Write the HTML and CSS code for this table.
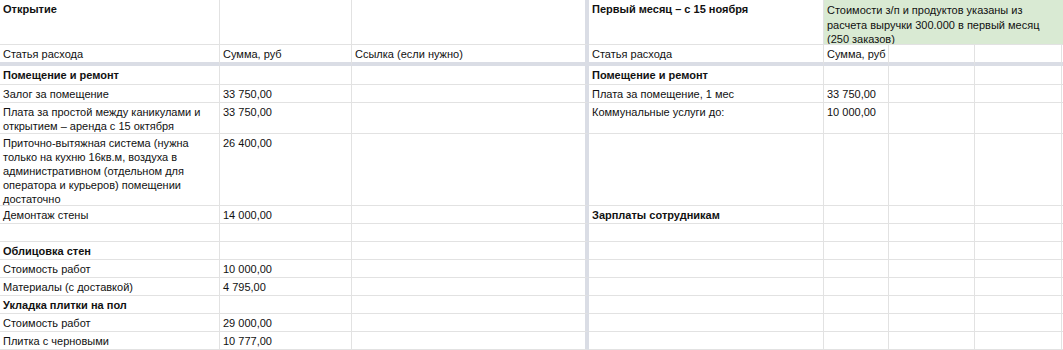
FILE: index.html
```html
<!DOCTYPE html>
<html lang="ru">
<head>
<meta charset="utf-8">
<title>Открытие — смета</title>
<link rel="stylesheet" href="styles.css">
</head>
<body>
<div class="sheet">
  <!-- row 1 -->
  <div class="c b">Открытие</div>
  <div class="c"></div>
  <div class="c sep"></div>
  <div class="c b">Первый месяц – с 15 ноября</div>
  <div class="c green">Стоимости з/п и продуктов указаны из<br>расчета выручки 300.000 в первый месяц<br>(250 заказов)</div>
  <!-- row 2 -->
  <div class="c hdr">Статья расхода</div>
  <div class="c hdr">Сумма, руб</div>
  <div class="c hdr sep">Ссылка (если нужно)</div>
  <div class="c hdr">Статья расхода</div>
  <div class="c hdr nw">Сумма, руб</div>
  <div class="c hdr"></div>
  <div class="c hdr"></div>
  <div class="c hdr"></div>
  <!-- row 3 -->
  <div class="c b">Помещение и ремонт</div>
  <div class="c"></div>
  <div class="c sep"></div>
  <div class="c b">Помещение и ремонт</div>
  <div class="c"></div><div class="c"></div><div class="c"></div><div class="c"></div>
  <!-- row 4 -->
  <div class="c">Залог за помещение</div>
  <div class="c">33 750,00</div>
  <div class="c sep"></div>
  <div class="c">Плата за помещение, 1 мес</div>
  <div class="c nw">33 750,00</div>
  <div class="c"></div><div class="c"></div><div class="c"></div>
  <!-- row 5 -->
  <div class="c">Плата за простой между каникулами и открытием – аренда с 15 октября</div>
  <div class="c">33 750,00</div>
  <div class="c sep"></div>
  <div class="c">Коммунальные услуги до:</div>
  <div class="c nw">10 000,00</div>
  <div class="c"></div><div class="c"></div><div class="c"></div>
  <!-- row 6 -->
  <div class="c">Приточно-вытяжная система (нужна только на кухню 16кв.м, воздуха в административном (отдельном для оператора и курьеров) помещении достаточно</div>
  <div class="c">26 400,00</div>
  <div class="c sep"></div>
  <div class="c"></div>
  <div class="c"></div><div class="c"></div><div class="c"></div><div class="c"></div>
  <!-- row 7 -->
  <div class="c">Демонтаж стены</div>
  <div class="c">14 000,00</div>
  <div class="c sep"></div>
  <div class="c b">Зарплаты сотрудникам</div>
  <div class="c"></div><div class="c"></div><div class="c"></div><div class="c"></div>
  <!-- row 8 -->
  <div class="c"></div>
  <div class="c"></div>
  <div class="c sep"></div>
  <div class="c"></div>
  <div class="c"></div><div class="c"></div><div class="c"></div><div class="c"></div>
  <!-- row 9 -->
  <div class="c b">Облицовка стен</div>
  <div class="c"></div>
  <div class="c sep"></div>
  <div class="c"></div>
  <div class="c"></div><div class="c"></div><div class="c"></div><div class="c"></div>
  <!-- row 10 -->
  <div class="c">Стоимость работ</div>
  <div class="c">10 000,00</div>
  <div class="c sep"></div>
  <div class="c"></div>
  <div class="c"></div><div class="c"></div><div class="c"></div><div class="c"></div>
  <!-- row 11 -->
  <div class="c">Материалы (с доставкой)</div>
  <div class="c">4 795,00</div>
  <div class="c sep"></div>
  <div class="c"></div>
  <div class="c"></div><div class="c"></div><div class="c"></div><div class="c"></div>
  <!-- row 12 -->
  <div class="c b">Укладка плитки на пол</div>
  <div class="c"></div>
  <div class="c sep"></div>
  <div class="c"></div>
  <div class="c"></div><div class="c"></div><div class="c"></div><div class="c"></div>
  <!-- row 13 -->
  <div class="c">Стоимость работ</div>
  <div class="c">29 000,00</div>
  <div class="c sep"></div>
  <div class="c"></div>
  <div class="c"></div><div class="c"></div><div class="c"></div><div class="c"></div>
  <!-- row 14 -->
  <div class="c">Плитка с черновыми</div>
  <div class="c">10 777,00</div>
  <div class="c sep"></div>
  <div class="c"></div>
  <div class="c"></div><div class="c"></div><div class="c"></div><div class="c"></div>
</div>
</body>
</html>
```

FILE: styles.css
```css
html, body {
  margin: 0;
  padding: 0;
  background: #ffffff;
  overflow: hidden;
}

.sheet {
  display: grid;
  grid-template-columns: 220px 132px 237px 235px 65px 86px 87px 1fr;
  grid-template-rows: 45px 21px 19px 18px 31px 72px repeat(8, 18px);
  width: 100%;
  font-family: "Liberation Sans", Arial, sans-serif;
  font-size: 11px;
  line-height: 14px;
  color: #111111;
}

.c {
  box-sizing: border-box;
  min-width: 0;
  border-right: 1px solid #e2e2e2;
  border-bottom: 1px solid #e2e2e2;
  padding: 2px 3px 0 3px;
  overflow: hidden;
}

.nw {
  white-space: nowrap;
  padding-right: 0;
}

.b {
  font-weight: bold;
}

.sep {
  border-right: 4px solid #dadde5;
}

.hdr {
  border-bottom: 4px solid #dadde5;
}

.green {
  grid-column: 5 / -1;
  background: #d9ead3;
  padding-top: 3px;
  line-height: 14.5px;
}
```
